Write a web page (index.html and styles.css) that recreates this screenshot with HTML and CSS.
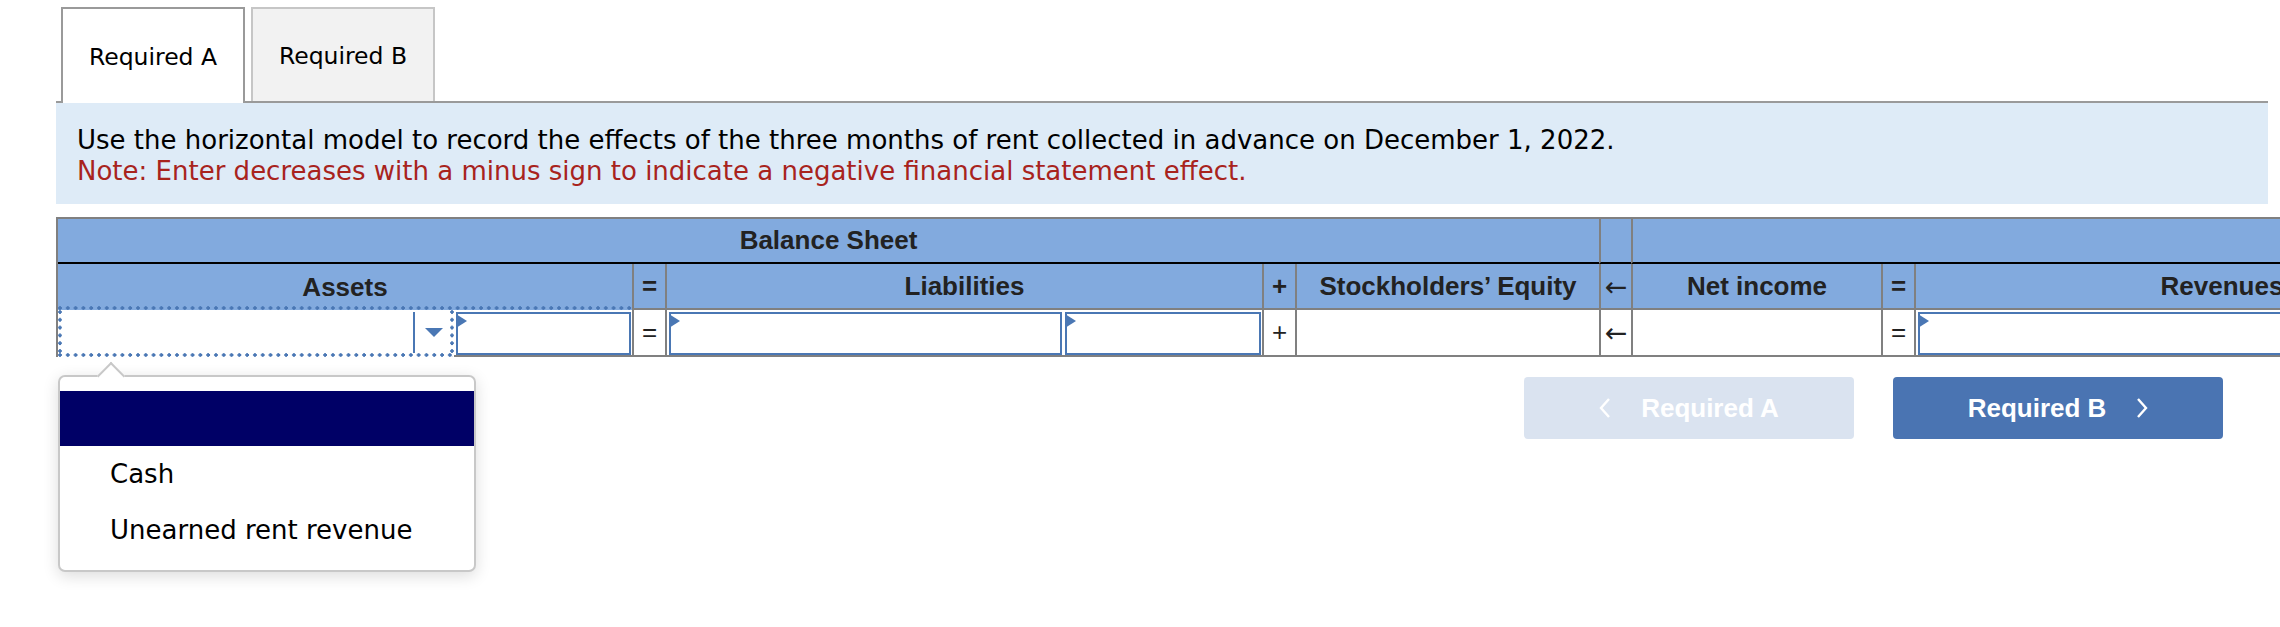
FILE: index.html
```html
<!DOCTYPE html>
<html lang="en">
<head>
    <meta charset="UTF-8">
    <title>Horizontal model</title>
    <link rel="stylesheet" href="styles.css">
</head>
<body>
<div class="page">

    <div class="tabs">
        <div class="tab active">Required A</div>
        <div class="tab">Required B</div>
    </div>

    <div class="prompt">
        <p>Use the horizontal model to record the effects of the three months of rent collected in advance on December 1, 2022.</p>
        <p class="note">Note: Enter decreases with a minus sign to indicate a negative financial statement effect.</p>
    </div>

    <div class="model">
        <!-- group row -->
        <div class="hd band span7">Balance Sheet</div>
        <div class="hd band edge"></div>
        <div class="hd band edge span3"></div>

        <!-- caption row -->
        <div class="hd cap span2 focus-line">Assets</div>
        <div class="hd cap edge sym">=</div>
        <div class="hd cap edge span2">Liabilities</div>
        <div class="hd cap edge sym">+</div>
        <div class="hd cap edge">Stockholders’ Equity</div>
        <div class="hd cap edge sym arrow">&larr;</div>
        <div class="hd cap edge">Net income</div>
        <div class="hd cap edge sym">=</div>
        <div class="hd cap edge">Revenues</div>

        <!-- entry row -->
        <div class="cell select">
            <span class="caret-btn">
                <svg width="18" height="9" viewBox="0 0 18 9"><polygon points="0,0 18,0 9,9" fill="#4a77b4"/></svg>
            </span>
            <div class="popup">
                <div class="opt picked"></div>
                <div class="opt">Cash</div>
                <div class="opt">Unearned rent revenue</div>
            </div>
        </div>
        <div class="cell"><div class="field"></div></div>
        <div class="cell edge sym">=</div>
        <div class="cell edge"><div class="field"></div></div>
        <div class="cell"><div class="field"></div></div>
        <div class="cell edge sym">+</div>
        <div class="cell edge"></div>
        <div class="cell edge sym arrow">&larr;</div>
        <div class="cell edge"></div>
        <div class="cell edge sym">=</div>
        <div class="cell edge"><div class="field"></div></div>
    </div>

    <div class="nav">
        <button class="nav-btn prev">
            <svg width="12" height="22" viewBox="0 0 12 22"><polyline points="10,2 2,11 10,20" fill="none" stroke="#fff" stroke-width="2.4"/></svg>
            Required A
        </button>
        <button class="nav-btn next">
            Required B
            <svg width="12" height="22" viewBox="0 0 12 22"><polyline points="2,2 10,11 2,20" fill="none" stroke="#fff" stroke-width="2.4"/></svg>
        </button>
    </div>

</div>
</body>
</html>
```

FILE: styles.css
```css
html {
    overflow: hidden;
}
body {
    margin: 0;
    min-height: 627px;
    background: #fff;
    font-family: "DejaVu Sans", Verdana, sans-serif;
    color: #000;
}
.page {
    margin-left: 56px;
    width: 2212px;
}

/* tabs */
.tabs {
    display: flex;
    align-items: flex-end;
    gap: 6px;
    padding: 7px 0 0 5px;
    border-bottom: 2px solid #9a9a9a;
}
.tab {
    box-sizing: border-box;
    width: 184px;
    height: 94px;
    border: 2px solid #c6c6c6;
    border-bottom: none;
    background: #f2f2f2;
    display: flex;
    align-items: center;
    justify-content: center;
    font-size: 23.5px;
    padding-top: 2px;
}
.tab.active {
    height: 96px;
    margin-bottom: -2px;
    border-color: #9a9a9a;
    background: #fff;
}

/* instructions */
.prompt {
    background: #deebf7;
    padding: 22px 21px 17px;
}
.prompt p {
    margin: 0;
    font-size: 26px;
    line-height: 31px;
}
.prompt .note {
    color: #a8231d;
}

/* horizontal model grid */
.model {
    display: grid;
    grid-template-columns: 396px 178px 33px 398px 199px 33px 304px 32px 250px 33px 614px;
    grid-template-rows: 45px 46px 47px;
    width: max-content;
    margin-top: 13px;
    border-top: 2px solid #808080;
    border-left: 2px solid #808080;
}
.hd, .cell {
    box-sizing: border-box;
    border-bottom: 2px solid #808080;
}
.hd {
    background: #82aade;
    display: flex;
    align-items: center;
    justify-content: center;
    font-family: "Liberation Sans", Arial, sans-serif;
    font-weight: bold;
    font-size: 26px;
    color: #222;
}
.band {
    border-bottom-color: #000;
}
.edge {
    border-left: 2px solid #808080;
}
.span2 { grid-column: span 2; }
.span3 { grid-column: span 3; }
.span7 { grid-column: span 7; }
.sym {
    font-size: 26px;
}
.arrow {
    font-family: "DejaVu Sans", sans-serif;
    font-weight: normal;
    font-size: 27px;
    color: #222;
}
.focus-line {
    border-bottom: none;
    background:
        radial-gradient(circle at 2px 2px, #4a77b4 1.5px, transparent 2px) left bottom / 7.8px 4px repeat-x,
        #82aade;
}

.cell {
    background: #fff;
    display: flex;
    align-items: center;
    justify-content: center;
}
.cell.sym {
    font-family: "Liberation Sans", Arial, sans-serif;
    color: #222;
}
.cell.arrow {
    font-family: "DejaVu Sans", sans-serif;
}
.field {
    box-sizing: border-box;
    position: relative;
    align-self: flex-start;
    width: calc(100% - 3px);
    height: 43px;
    margin: 2px 1px 0 2px;
    border: 2px solid #4a77b4;
    background: #fff;
}
.field::before {
    content: "";
    position: absolute;
    left: -2px;
    top: 0;
    border-left: 11px solid #4a77b4;
    border-top: 7px solid transparent;
    border-bottom: 7px solid transparent;
}

/* focused account dropdown */
.select {
    position: relative;
    border-bottom: none;
    justify-content: flex-end;
    background:
        radial-gradient(circle at 2px 2px, #4a77b4 1.5px, transparent 2px) left bottom / 7.8px 4px repeat-x,
        radial-gradient(circle at 2px 2px, #4a77b4 1.5px, transparent 2px) left top / 4px 7.8px repeat-y,
        radial-gradient(circle at 2px 2px, #4a77b4 1.5px, transparent 2px) right top / 4px 7.8px repeat-y,
        #fff;
}
.caret-btn {
    box-sizing: border-box;
    width: 39px;
    height: 41px;
    margin: 0 2px 2px 0;
    border-left: 2px solid #4a77b4;
    display: flex;
    align-items: center;
    justify-content: center;
}
.popup {
    position: absolute;
    left: 0;
    top: 65px;
    width: 418px;
    box-sizing: border-box;
    padding: 14px 0 12px;
    border: 2px solid #c8c8c8;
    border-radius: 7px;
    background: #fff;
    box-shadow: 0 4px 16px rgba(0, 0, 0, 0.14);
    z-index: 5;
}
.popup::before {
    content: "";
    position: absolute;
    left: 41px;
    top: -11px;
    width: 18px;
    height: 18px;
    background: #fff;
    border-top: 2px solid #c8c8c8;
    border-left: 2px solid #c8c8c8;
    transform: rotate(45deg);
}
.opt {
    height: 56px;
    display: flex;
    align-items: center;
    padding-left: 50px;
    font-size: 26px;
}
.opt.picked {
    position: relative;
    height: 55px;
    background: #000066;
}

/* prev / next */
.nav {
    display: flex;
    justify-content: flex-end;
    gap: 39px;
    margin: 20px 45px 0 0;
}
.nav-btn {
    width: 330px;
    height: 62px;
    border: none;
    border-radius: 4px;
    display: flex;
    align-items: center;
    justify-content: center;
    gap: 30px;
    font-family: "Liberation Sans", Arial, sans-serif;
    font-weight: bold;
    font-size: 26px;
    color: #fff;
}
.nav-btn.prev {
    background: #dae3f0;
}
.nav-btn.next {
    background: #4a74b2;
}
```
